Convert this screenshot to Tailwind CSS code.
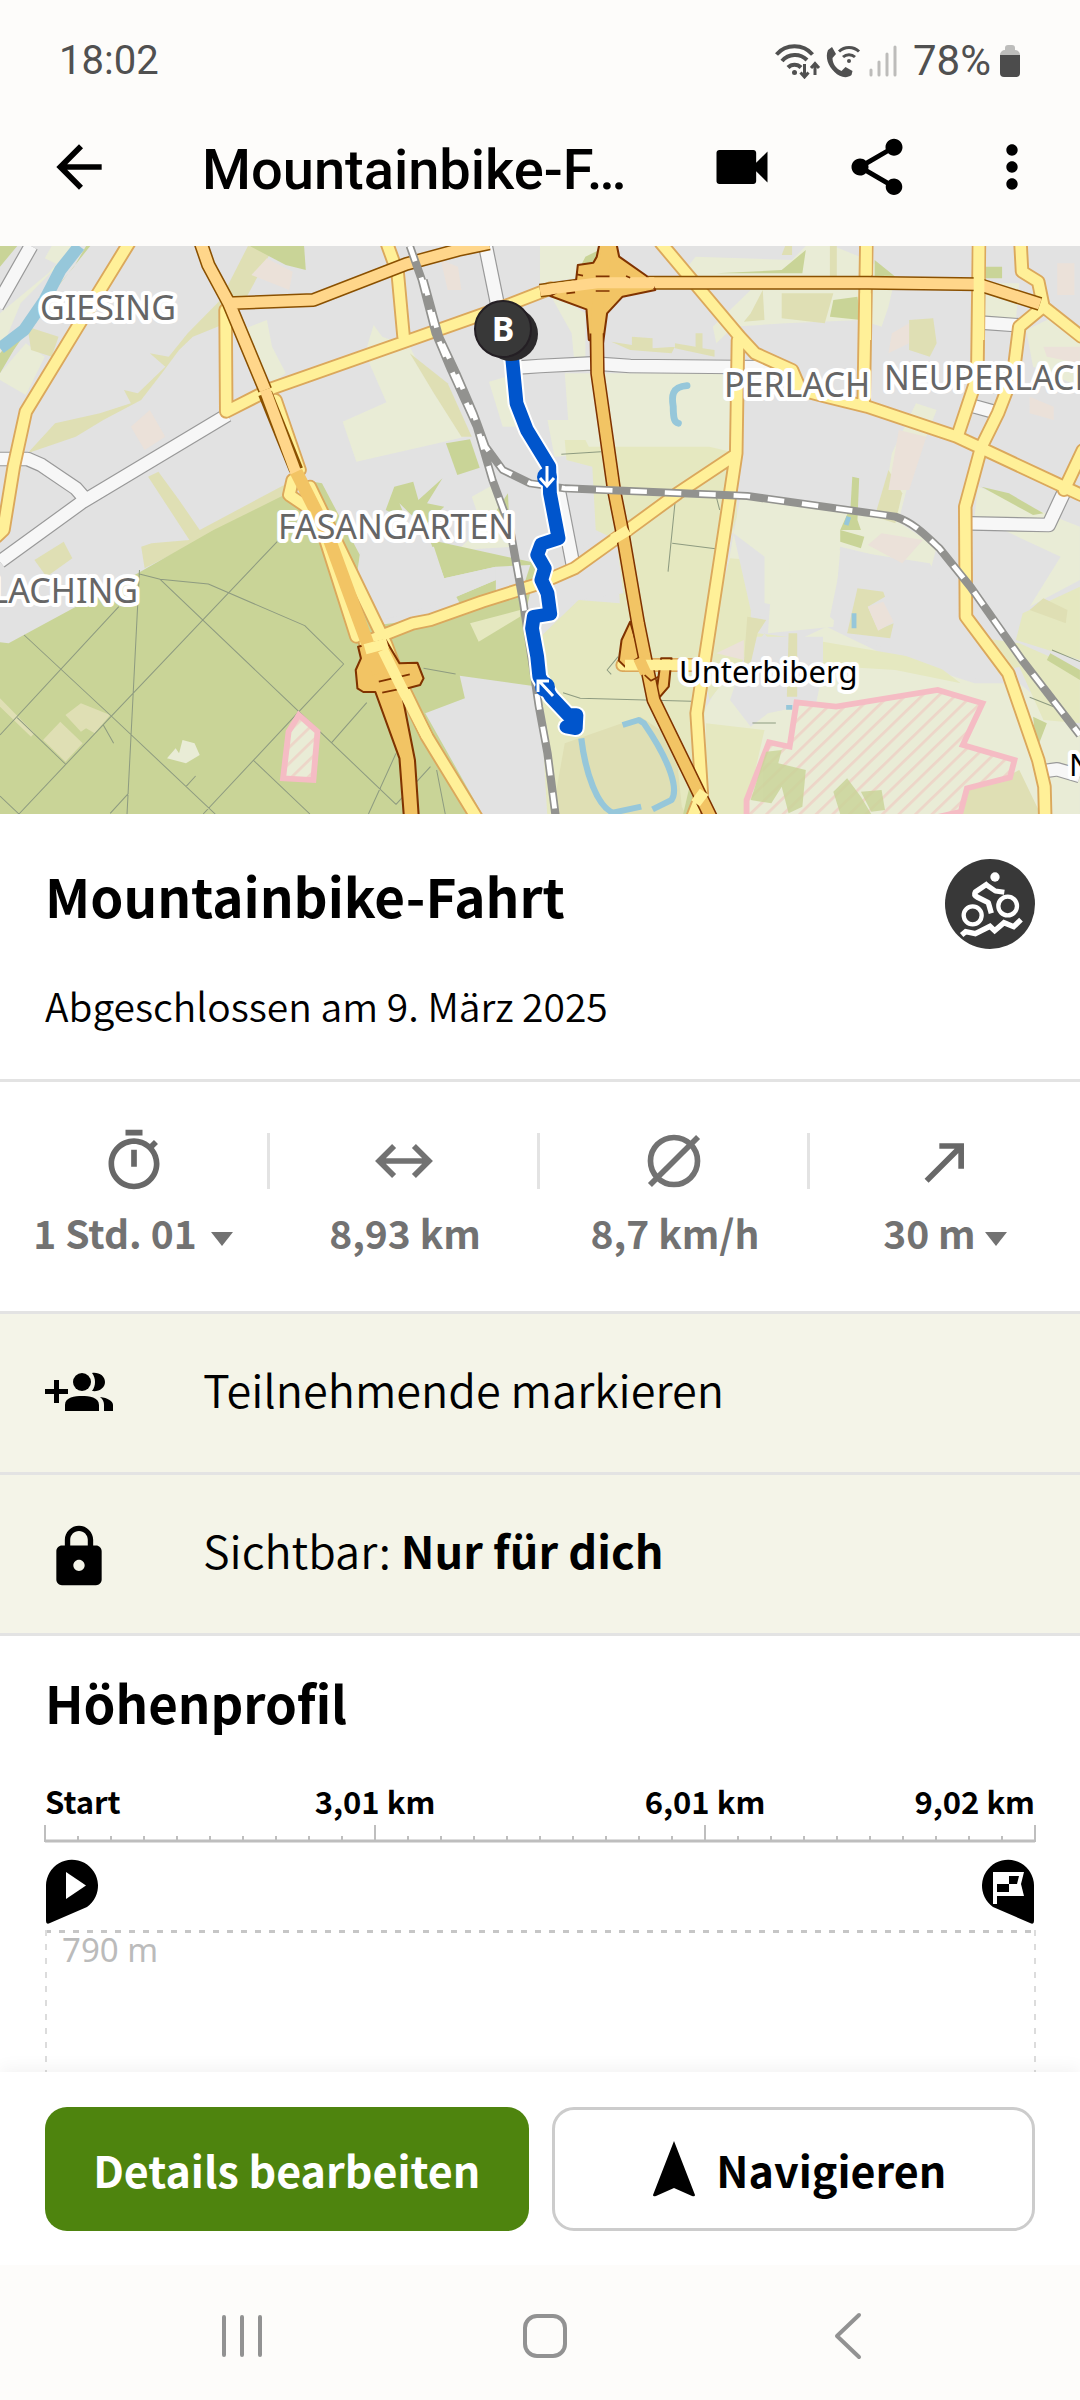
<!DOCTYPE html>
<html lang="de">

<head>
  <meta charset="UTF-8" />
  <meta name="viewport" content="width=device-width, initial-scale=1.0" />
  <title>Mountainbike-Fahrt</title>
  <script src="https://cdn.jsdelivr.net/npm/@tailwindcss/browser@4"></script>
</head>

<body class="flex flex-col min-h-screen bg-white text-black font-['Noto_Sans_CJK_SC','Noto_Sans',sans-serif]">

  <!-- Status bar -->
  <div class="flex items-center justify-between h-[88px] pt-[34px] px-[59px] bg-[#fdfcfa] text-[#505050] text-[40px] leading-[56px] font-[Roboto,sans-serif]">
    <span>18:02</span>
    <div class="flex items-center">
      <svg class="w-[46px] h-9" viewBox="0 0 46 36" fill="none" stroke="#505050" stroke-width="4">
        <path d="M1.500 11.500a24 24 0 0 1 36 0M7 18a17 17 0 0 1 25-1M13 24.500a9 9 0 0 1 13 0" />
        <circle cx="19.500" cy="29.500" r="2.500" fill="#505050" stroke="none" />
        <path d="M29.500 21v12M25.500 29.500l4 4.500 4-4.500M40 32V21M36 25l4-4.500 4 4.500" stroke-width="3" />
      </svg>
      <svg class="w-9 h-9 ml-1" viewBox="0 0 36 36">
        <path d="M3 7l4-3 4 7-3.500 4c0 6 4 11 9 13l4-4 7 4-1 4c-5 4-12 2-17-3C3 23 0 14 3 7z" fill="#505050" />
        <path d="M14 8.500a14.500 14.500 0 0 1 20 0M18 14a9 9 0 0 1 12 0" fill="none" stroke="#505050" stroke-width="3" />
        <circle cx="24" cy="18" r="2" fill="#505050" />
      </svg>
      <svg class="w-7 h-9 ml-2" viewBox="0 0 28 36" stroke="#bdbcba" stroke-width="3" stroke-linecap="round">
        <path d="M2 27v5M10 19v13M18 11v21M26 4v28" />
      </svg>
      <span class="ml-4 text-[42px]">78%</span>
      <svg class="w-[22px] h-9 ml-2" viewBox="0 0 22 36">
        <path d="M6 5a3 3 0 0 1 3-3h4a3 3 0 0 1 3 3v2a5 5 0 0 1 5 5H1a5 5 0 0 1 5-5z" fill="#bdbdbb" />
        <path d="M1 12h20v18a4 4 0 0 1-4 4H5a4 4 0 0 1-4-4z" fill="#4c4c4c" />
      </svg>
    </div>
  </div>

  <!-- App bar -->
  <header class="flex items-center h-[158px] pl-[45px] pr-px bg-[#fdfcfa]">
    <button aria-label="Zurück" class="shrink-0">
      <svg class="w-[68px] h-[68px]" viewBox="0 0 24 24"><path d="M20 11H7.830l5.590-5.590L12 4l-8 8 8 8 1.410-1.410L7.830 13H20v-2z" /></svg>
    </button>
    <h1 class="flex-1 min-w-0 truncate ml-[89px] pt-[6px] text-[56px] leading-[72px] font-medium font-[Roboto,sans-serif]">Mountainbike-F…</h1>
    <button aria-label="Video" class="shrink-0 flex justify-center w-[135px]">
      <svg class="w-[68px] h-[68px]" viewBox="0 0 24 24"><path d="M17 10.500V7c0-.55-.45-1-1-1H4c-.55 0-1 .45-1 1v10c0 .55.45 1 1 1h12c.55 0 1-.45 1-1v-3.500l4 4v-11l-4 4z" /></svg>
    </button>
    <button aria-label="Teilen" class="shrink-0 flex justify-center w-[135px]">
      <svg class="w-[68px] h-[68px]" viewBox="0 0 24 24"><path d="M18 16.080c-.76 0-1.440.3-1.960.77L8.910 12.700c.05-.23.09-.46.09-.7s-.04-.47-.09-.7l7.050-4.110c.54.5 1.250.81 2.040.81 1.660 0 3-1.340 3-3s-1.340-3-3-3-3 1.340-3 3c0 .24.04.47.09.7L8.040 9.810C7.500 9.310 6.790 9 6 9c-1.660 0-3 1.340-3 3s1.340 3 3 3c.79 0 1.500-.31 2.040-.81l7.120 4.160c-.05.21-.08.43-.08.65 0 1.610 1.310 2.920 2.920 2.920s2.920-1.310 2.920-2.920-1.310-2.920-2.920-2.920z" /></svg>
    </button>
    <button aria-label="Mehr" class="shrink-0 flex justify-center w-[135px]">
      <svg class="w-[68px] h-[68px]" viewBox="0 0 24 24"><path d="M12 8c1.100 0 2-.9 2-2s-.9-2-2-2-2 .9-2 2 .9 2 2 2zm0 2c-1.100 0-2 .9-2 2s.9 2 2 2 2-.9 2-2-.9-2-2-2zm0 6c-1.100 0-2 .9-2 2s.9 2 2 2 2-.9 2-2-.9-2-2-2z" /></svg>
    </button>
  </header>

  <main class="flex-1 flex flex-col">
    <!-- Map -->
    <svg class="block w-full h-auto" viewBox="0 0 1080 568" role="img" aria-label="Karte der Tour">
      <defs>
        <pattern id="hatch" width="34" height="34" patternUnits="userSpaceOnUse" patternTransform="rotate(45)">
          <rect width="34" height="34" fill="#e9ecd6" />
          <rect width="8" height="34" fill="#edd5c8" />
        </pattern>
      </defs>
      <rect width="1080" height="568" fill="#e2e2e2" />

      <g transform="scale(.34436 .33333) translate(0 -18)" stroke-linejoin="round">
        <!-- Parks, fields, woods -->
        <g fill="#e9ecd6">
          <path d="M0 220L140 100 210 18H150L130 55 170 75 60 190 0 340V420L75 465 130 350 75 310 0 400z" />
          <path d="M700 270L775 240 790 320 830 400 790 430 740 340z" />
          <path d="M1085 255L1110 290 1190 320 1260 460 1350 590 1290 605 1035 665 995 545 1122 487 1060 340z" />
          <path d="M1420 425L1470 410 1480 470 1520 560 1460 560z" />
          <path d="M1370 770L1440 730 1480 830 1500 920 1330 930 1400 860z" />
          <path d="M1568 18H1740L1700 110 1568 130z" />
          <path d="M1590 540L1650 540 1640 400H2130V880L1770 880 1760 640 1610 650z" />
          <path d="M1590 150L1700 220 1700 390H1670L1660 280z" />
          <path d="M2020 50L2300 60 2340 18H2420L2520 60 2600 110 2580 200 2560 260 2500 240 2280 250 2130 260 2080 310 2070 260 2180 150 1960 130z" />
          <path d="M2660 490L2720 510 2640 720 2610 840 2560 830 2590 640z" />
          <path d="M2860 130H2960L2950 240H2850z" />
          <path d="M2980 270L3060 230 3136 300V440L3000 380z" />
          <path d="M2840 740L3136 860V1020L2990 1100 3080 950 2830 830z" />
          <path d="M2150 770L2400 790 2600 840 2720 920 2700 1000 2560 950 2440 920 2400 1130 2180 1080 2110 1000z" />
          <path d="M2110 1300L2400 1160 2560 1240 2830 1330 2960 1330 3136 1480V1740H2040V1420z" />
          <path d="M2240 1040L2300 1060 2290 950 2440 930 2420 1160 2230 1180z" />
        </g>
        <g fill="#e5e8c0">
          <path d="M1640 600H1700L1710 620H2060L2140 640V830L2100 960 2030 1560 2060 1740H1590L1560 1200 1680 1080 1800 1090 1790 900 1730 870 1720 680 1645 660z" />
          <path d="M2120 955L2185 960 2180 1130 2200 1180 2360 1200 2700 1260 2790 1330 2600 1290 2280 1270 2220 1180 2160 1260 2120 1300 2060 1380 2040 1250z" />
          <path d="M2050 1450L2220 1470 2160 1740H2050z" />
          <path d="M2700 1170L2960 1210 3136 1290V1450L3030 1440 2960 1280 2900 1300 2830 1190z" />
          <path d="M2970 1120L3136 1040V1260L2950 1200z" />
        </g>
        <g fill="#dfdfb4">
          <path d="M720 18L790 30 680 240 560 290 520 330 470 400 410 480 300 540 220 590 80 640 160 550 290 520 380 490 360 450 400 460 480 380 435 340 490 350 545 280 640 180z" />
          <path d="M80 260L170 290 150 350 90 330z" />
          <path d="M430 710L460 695 520 780 580 870 825 735 830 770 580 900 420 985 410 920 440 910 550 900z" />
          <path d="M100 960L185 905 210 955 135 1010z" />
          <path d="M1190 340L1300 430 1370 590 1340 590 1260 460z" />
          <path d="M2180 220L2215 150 2220 240 2160 245zM2270 160H2420L2395 250 2270 235zM2640 240L2710 235 2720 310 2700 350 2640 330zM2410 18H2430V120H2410zM2280 18H2300V45H2270z" />
          <path d="M1775 305L1835 315V290L1895 295V325L1960 320 1950 340 1830 330zM1960 310L2020 320V280H2040V325L2075 330V350L1960 325z" />
          <path d="M2580 690L2620 760 2600 850 2540 830z" />
          <path d="M2990 1110L3030 1075 3100 1110 3095 1150z" />
          <path d="M1640 1510L1860 1430 1960 1500 1980 1700 2000 1740H1600z" />
          <path d="M2800 1650L2900 1620 2960 1590 3030 1740H2780z" />
        </g>
        <g fill="#c9d497">
          <path d="M0 1207L25 1210 400 1000 620 870 825 765 880 800 910 725 935 730 1045 945 1035 1010 1100 1155 1350 1120 1325 1070 1440 1020V980L1290 1015 1260 920 1195 930 1250 900 1560 970 1530 1100 1548 1338 1335 1307 1350 1375 1235 1420 1410 1740H0z" />
          <path d="M1295 610L1365 598 1393 683 1328 705z" />
          <path d="M725 18H883L888 90 830 75z" />
          <path d="M0 18H50L0 80zM215 80L250 18H262L160 150 40 330 0 400V340z" />
          <path d="M1145 740L1200 725 1215 780 1285 715 1240 790 1290 800 1230 860 1160 790 1180 840 1120 810z" />
          <path d="M1700 50L1740 30 1720 120 1680 90z" />
          <path d="M2080 100L2270 90 2340 30 2330 100zM2420 180L2490 170 2500 240 2410 230zM2540 60L2600 110H2540zM2860 80H2910V115H2860z" />
          <path d="M2850 740L2930 760 3030 820 3000 825z" />
          <path d="M2440 870L2510 890 2500 925 2440 905zM2475 710L2495 715 2490 840 2500 870H2440L2470 800z" />
          <path d="M3050 1240L3136 1290V1320L3040 1260zM3000 1430L3040 1450 3010 1530z" />
          <path d="M2000 1650L2030 1560 2020 1740H1980z" />
          <path d="M1430 830L1475 760 1480 870z" />
        </g>
        <g fill="#e2e2e2">
          <path d="M1060 900L1250 905 1290 1015 1440 980V1020L1325 1070 1200 1115 1110 1140 1040 1010 1045 945z" />
          <path d="M1440 980L1540 975 1520 1040 1440 1060z" />
          <path d="M1568 940L1790 900 1810 1060 1680 1080 1568 1130z" />
          <path d="M2130 880L2220 950 2220 1110 2200 1140 2180 1110z" />
          <path d="M2180 1190H2390V1290L2370 1390 2230 1420 2180 1460 2120 1380z" />
          <path d="M2410 1130L2450 930 2700 970 2790 1130 2900 1290 2820 1320 2480 1190z" />
        </g>
        <g fill="#ebe1d9">
          <path d="M730 105L775 55 850 95 840 150z" />
          <path d="M380 560L435 510 480 590 420 630z" />
          <path d="M1280 60L1330 80 1340 150 1300 150z" />
          <path d="M2590 280L2640 250V310L2580 340zM3070 70H3120V165H3070zM3030 320H3136V370L3040 350zM2990 470L3060 500 3060 540 2990 520z" />
          <path d="M2610 570L2690 590 2640 750 2580 750z" />
          <path d="M2520 915L2560 880 2680 900 2620 970z" />
          <path d="M2080 1240L2160 1200V1260z" />
        </g>
        <g fill="#dfdfb4">
          <path d="M0 1375L100 1480 90 1490 0 1400zM190 1425L235 1390 320 1425 275 1480 250 1465 235 1475zM125 1500L175 1445 240 1510 190 1565z" />
          <path d="M2170 1130L2225 1140 2200 1180 2180 1270H2160zM2290 1180H2315V1370H2285z" />
          <path d="M2490 1045L2565 1055 2570 1070 2520 1100 2550 1170 2595 1150 2585 1195 2460 1180z" />
        </g>
        <path d="M2520 1100L2565 1085 2595 1145 2550 1172z" fill="#ebe1d9" />
        <path d="M1365 1150L1510 1110 1510 1130 1390 1205z" fill="#e5e8c0" />
        <path d="M485 1555L510 1525 520 1540 530 1500 565 1510 580 1545 540 1570z" fill="#e9ecd6" />

        <!-- Water -->
        <g fill="none" stroke="#96c7da">
          <path d="M230 18L175 90 130 180 70 270 0 325" stroke-width="36" />
          <path d="M1995 437C1950 440 1950 470 1955 500 1955 540 1960 548 1970 550" stroke-width="20" stroke-linecap="round" />
          <path d="M1688 1495C1700 1600 1735 1700 1780 1718L1862 1700M1895 1708L1950 1680C1970 1650 1950 1570 1870 1450L1855 1440 1808 1455" stroke-width="18" />
          <path d="M2480 1120v45M2465 830l-8 25M2283 1402h18" stroke-width="14" />
        </g>

        <!-- Forest tracks -->
        <g fill="none" stroke="#8e9b80" stroke-width="3">
          <path d="M405 990L368 1740M405 1002L465 1018 605 1032 885 1157 998 1272 868 1415 590 1722M465 1018L868 1415 1150 1693 1250 1580M805 905L320 1432M70 1185L323 1428 625 1722M50 1433L190 1572M0 1668L55 1722 320 1432M345 1100L0 1485M735 1560L900 1722M1065 1388L963 1508M1150 1540L1070 1722M1230 1285L1323 1302M1268 1590L1293 1722M300 1455L330 1510M540 1640L568 1608M320 1720L373 1660" />
          <path d="M1630 643L1745 635M1960 790L1940 995M1952 910L2078 926M1635 1358L1685 1375 2008 1384M2080 770L2090 810M2185 1449H2253M2475 1600V1640M2990 1372L3060 1400M3055 1230L3136 1265M2335 1655L2300 1722M1795 1250L1763 1290 1775 1303" />
        </g>

        <!-- Restricted areas -->
        <g stroke="#f5bcc4" stroke-width="17" fill="url(#hatch)" stroke-linejoin="miter">
          <path d="M2313 1387L2428 1400 2723 1350 2853 1390 2796 1515 2946 1560 2933 1612 2808 1645 2790 1715 2600 1760H2168V1680L2233 1507 2293 1520z" />
          <path d="M868 1425L922 1475 910 1620 822 1615 838 1475z" />
        </g>
        <g fill="#c9d497" opacity=".8">
          <path d="M2225 1535L2270 1530 2260 1570 2340 1590 2330 1700 2290 1720 2270 1640 2240 1690 2180 1680z" />
          <path d="M2420 1655L2460 1615 2500 1670 2530 1722H2440zM2500 1655L2560 1650 2570 1710 2530 1715z" />
        </g>

        <!-- Minor roads -->
        <g id="white-roads" fill="none">
          <path d="M0 965L240 785 660 525M0 657L80 657 120 675 220 745 250 780M90 18L-10 200M1410 18L1445 195M1510 382L1568 378 1720 370 1830 378 2240 382M1620 740L1665 980M2850 248L2960 256M2815 495L2885 515M2820 850L3045 855 3095 745M3020 1595L3070 1588 3136 1608" />
        </g>

        <!-- Yellow roads -->
        <g id="yellow-roads" fill="none" stroke-linecap="round">
          <path d="M380 0L255 210 75 515 40 680 10 870 -10 890M655 210L657 515 790 445 1190 300 1450 205 1600 145M1120 0L1155 100 1172 290M850 720L840 765 890 800M800 480L870 690M930 850L1035 1190M900 740L970 890 1120 1210 1160 1320 1240 1490 1400 1760M1060 1207L1200 1150 1250 1140 1400 1085 1568 1030 1668 985 1803 885 1968 760 2135 645M1920 10L2148 290 2193 340 2300 390 2325 450 2400 470 2518 500 2778 590 3140 765M2143 300L2138 640 2103 880 2023 1420 2038 1660 2000 1760M2516 0L2508 490M2843 0L2838 410 2780 590M2963 0L2968 95 3015 125 3030 200 2960 260 2943 400 2898 520 2850 620 2803 800 2805 1130 2928 1300 3015 1560 3033 1640 3036 1760M3030 200L3140 290M3145 630L3090 750M1808 1275L2040 1275" />
        </g>

        <!-- Orange roads -->
        <g id="orange-roads" fill="none">
          <path d="M580 0L605 75 665 190 770 450M660 190L910 180 1180 72 1330 30 1420 10M1568 152L1740 128 1900 128 2520 128 2840 133 3020 192" />
        </g>
        <path d="M770 460L860 690" stroke="#8a5000" stroke-width="42" />
        <path d="M770 450L860 700" stroke="#ffd68a" stroke-width="32" />

        <!-- Motorways -->
        <g fill="#f2c464" stroke="#803300" stroke-width="6">
          <path d="M1743 0L1733 50 1723 68 1678 75 1673 120 1630 150 1598 168 1703 208 1710 300 1751 310 1763 220 1808 170 1903 150 1878 108 1798 50 1788 0z" />
          <path d="M1040 1220L1048 1255 1033 1290 1038 1345 1055 1356H1090L1160 1555 1175 1760H1218L1205 1560 1165 1350 1220 1335 1230 1315 1212 1268 1160 1270 1120 1200z" />
          <path d="M1830 1145L1805 1200 1797 1262 1815 1280 1860 1250zM1905 1365L1915 1290 1920 1255H1950L1942 1340 1900 1390z" />
        </g>
        <g fill="none">
          <path d="M1733 280L1735 400 1783 750 1808 880 1853 1150 1898 1380 2068 1740" stroke="#803300" stroke-width="42" />
          <path d="M1768 0L1745 120 1733 220 1735 400 1783 750 1808 880 1853 1150 1898 1380 2068 1740" stroke="#f2c464" stroke-width="33" />
          <path d="M860 695L950 880 1060 1190 1100 1300" stroke="#f2c464" stroke-width="38" />
          <path d="M1590 148L1740 128 1900 128" stroke="#ffd68a" stroke-width="33" />
          <path d="M1110 1358L1170 1345M1100 1325L1190 1303M1730 109h40M1730 153h40M1675 103l18 4M1645 160l25-3M1818 108l12 5" stroke="#803300" stroke-width="5" />
          <path d="M2516 18V105M2514 160V300M2843 18V300M1125 1210L1060 1228M1112 1230L1165 1340 1240 1490M1780 898L1825 870M2020 1690L2045 1655M1815 1275L2040 1275" stroke="#fff098" stroke-width="31" />
          <path d="M1855 1255L1875 1300" stroke="#f2c464" stroke-width="33" />
          <path d="M1872 1305L1890 1322 1912 1310" stroke="#803300" stroke-width="5" />
        </g>

        <!-- Railway -->
        <g id="rail" fill="none">
          <path d="M1190 18L1225 120 1265 280 1310 390 1385 560 1430 720 1480 860 1520 1090 1565 1400 1590 1540 1615 1740M1230 120L1275 290 1325 400 1375 520 1410 620 1460 690 1540 730 1640 745 2170 768 2600 830C2660 850 2700 900 2728 925L2818 1040 2968 1260 3136 1485" />
        </g>

        <!-- Recorded track -->
        <g id="track" fill="none" stroke-linecap="round">
          <path d="M1485 330L1500 490 1530 570 1595 680 1597 760 1622 895 1572 912 1560 945 1582 985 1572 1020 1590 1060 1598 1122 1550 1130 1545 1165 1560 1250 1566 1310 1600 1370 1650 1425 1674 1425 1672 1465 1645 1460" />
        </g>
      </g>

      <!-- Direction arrows on the track -->
      <g fill="none" stroke="#fff" stroke-width="3">
        <circle cx="547" cy="231" r="10" fill="#0055cc" stroke="none" />
        <path d="M547 220v18M540 232l7 8 7-8" />
        <circle cx="545" cy="441" r="10" fill="#0055cc" stroke="none" />
        <path d="M553 450l-13-14M538 446v-11h11" />
      </g>

      <!-- Place names -->
      <g class="font-['Noto_Sans',sans-serif] text-[34px]" fill="#666" stroke="#fff" stroke-width="8" stroke-linejoin="round" paint-order="stroke">
        <text x="40" y="74">GIESING</text>
        <text x="278" y="293">FASANGARTEN</text>
        <text x="138" y="357" text-anchor="end">HARLACHING</text>
        <text x="724" y="151">PERLACH</text>
        <text x="884" y="144">NEUPERLACH</text>
        <g fill="#000" class="text-[31px]">
          <text x="679" y="437">Unterbiberg</text>
          <text x="1069" y="530">Neubiberg</text>
        </g>
      </g>

      <!-- Start and end pins -->
      <circle cx="511" cy="88" r="27" fill="#2c2a2c" />
      <circle cx="503" cy="83" r="28" fill="#383838" stroke="#241f24" stroke-width="2" />
      <text x="503" y="95" text-anchor="middle" fill="#fff" class="font-['Noto_Sans',sans-serif] text-[34px] font-bold">B</text>
    </svg>

    <!-- Title -->
    <section class="flex justify-between px-[45px] pt-[45px] pb-11">
      <div>
        <h2 class="text-[53px] leading-[72px] font-bold">Mountainbike-Fahrt</h2>
        <p class="mt-11 text-[39px] leading-[60px] font-[350]">Abgeschlossen am 9. März 2025</p>
      </div>
      <svg class="w-[90px] h-[90px]" viewBox="30 30 270 270" role="img" aria-label="Mountainbike">
        <circle cx="165" cy="165" r="135" fill="#383838" />
        <circle cx="180" cy="84" r="14" fill="#fff" />
        <g fill="none" stroke="#fff">
          <circle cx="113" cy="199" r="27" stroke-width="13" />
          <circle cx="218" cy="171" r="28" stroke-width="13" />
          <path d="M159 103L121 129Q116 138 126 144L160 161 169 193" stroke-width="16" stroke-linejoin="round" />
          <path d="M152 106L181 126 208 130" stroke-width="15" stroke-linejoin="round" />
          <path d="M80 258L92 248 121 254 165 232 179 245 207 221 236 233 258 212" stroke-width="16" />
        </g>
      </svg>
    </section>

    <!-- Stats -->
    <section class="grid grid-cols-4 border-y-3 border-[#e3e3e3] pt-[51px] pb-[51px] text-[#727272] text-[39px] font-bold">
      <div class="text-center">
        <div class="flex items-center justify-center h-14 border-r-3 border-[#e3e3e3]">
          <svg class="shrink-0 w-[68px] h-[68px]" viewBox="0 0 24 24" fill="#686868"><path d="M15 1H9v2h6V1zm-4 13h2V8h-2v6zm8.030-6.610l1.420-1.420c-.43-.51-.9-.99-1.410-1.410l-1.420 1.420C16.070 4.740 14.120 4 12 4c-4.970 0-9 4.030-9 9s4.020 9 9 9 9-4.030 9-9c0-2.120-.74-4.070-1.970-5.610zM12 20c-3.870 0-7-3.130-7-7s3.130-7 7-7 7 3.130 7 7-3.130 7-7 7z" /></svg>
        </div>
        <button class="flex items-center justify-center w-full mt-[15px] pr-1 leading-[56px]">1 Std. 01
          <svg class="w-[22px] h-[14px] ml-[14px] mt-[14px]" viewBox="0 0 22 14" fill="#727272"><path d="M0 0h22L11 14z" /></svg>
        </button>
      </div>
      <div class="text-center">
        <div class="flex items-center justify-center h-14 border-r-3 border-[#e3e3e3]">
          <svg class="shrink-0 w-[68px] h-[68px]" viewBox="0 0 24 24" fill="none" stroke="#727272" stroke-width="2"><path d="M3 12h18M8.500 6.700L3.200 12l5.300 5.300M15.500 6.700l5.300 5.300-5.300 5.300" /></svg>
        </div>
        <p class="mt-[15px] leading-[56px]">8,93 km</p>
      </div>
      <div class="text-center">
        <div class="flex items-center justify-center h-14 border-r-3 border-[#e3e3e3]">
          <svg class="shrink-0 w-[68px] h-[68px]" viewBox="0 0 24 24" fill="none" stroke="#727272" stroke-width="2"><circle cx="12" cy="12" r="8.300" /><path d="M3.500 20.500l17-17" /></svg>
        </div>
        <p class="mt-[15px] leading-[56px]">8,7 km/h</p>
      </div>
      <div class="text-center">
        <div class="flex items-center justify-center h-14">
          <svg class="shrink-0 w-[68px] h-[68px]" viewBox="0 0 24 24" fill="none" stroke="#686868" stroke-width="2"><path d="M5.500 19L17.700 6.800M10 6.700h7.700v8" /></svg>
        </div>
        <button class="flex items-center justify-center w-full mt-[15px] leading-[56px]">30 m
          <svg class="w-[22px] h-[14px] ml-[9px] mt-[14px]" viewBox="0 0 22 14" fill="#727272"><path d="M0 0h22L11 14z" /></svg>
        </button>
      </div>
    </section>

    <!-- Participants and visibility -->
    <button class="flex items-center w-full h-[161px] px-[45px] border-b-3 border-[#e3e3e3] bg-[#f4f4e8] text-left">
      <svg class="shrink-0 w-[68px] h-[68px]" viewBox="0 -3 68 68">
        <path d="M0 27h9v-9h5v9h9v5h-9v9H9v-9H0z" />
        <circle cx="37" cy="20" r="9" />
        <path d="M20 49v-6c0-8 10-9 17-9s17 1 17 9v6zM47 11c7-1 13 3 13 9s-6 10-13 9c4-5 4-13 0-18zM55 35c8 1 13 4 13 8v6h-9v-6c0-3-1-6-4-8z" />
      </svg>
      <span class="ml-[90px] pb-2 text-[45px] leading-[60px] font-[350]">Teilnehmende markieren</span>
    </button>
    <button class="flex items-center w-full h-[161px] px-[45px] border-b-3 border-[#e3e3e3] bg-[#f4f4e8] text-left">
      <svg class="shrink-0 w-[68px] h-[68px]" viewBox="0 -1 24 24"><path d="M18 8h-1V6c0-2.760-2.240-5-5-5S7 3.240 7 6v2H6c-1.100 0-2 .9-2 2v10c0 1.100.9 2 2 2h12c1.100 0 2-.9 2-2V10c0-1.100-.9-2-2-2zm-6 9c-1.100 0-2-.9-2-2s.9-2 2-2 2 .9 2 2-.9 2-2 2zm3.100-9H8.900V6c0-1.710 1.390-3.100 3.100-3.100 1.710 0 3.100 1.390 3.100 3.100v2z" /></svg>
      <span class="ml-[90px] pb-2 text-[45px] leading-[60px] font-[350]">Sichtbar: <b class="font-bold">Nur für dich</b></span>
    </button>

    <!-- Elevation profile -->
    <section class="flex-1 flex flex-col px-[45px] pt-[30px]">
      <h2 class="text-[51px] leading-[72px] font-bold">Höhenprofil</h2>
      <div class="grid grid-cols-6 mt-[41px] text-[31px] leading-[44px] font-bold">
        <span>Start</span>
        <span class="col-span-2 text-center">3,01 km</span>
        <span class="col-span-2 text-center">6,01 km</span>
        <span class="text-right">9,02 km</span>
      </div>
      <svg id="axis" class="w-full h-[18px] mt-0.5 overflow-visible" stroke="#bebebe" stroke-width="2">
        <line x1="0" y1="16" x2="100%" y2="16" stroke-width="3" />
      </svg>
      <div class="flex justify-between mt-[15px]">
        <svg class="w-[54px] h-[66px]" viewBox="0 0 54 66">
          <path d="M1 27a26 26 0 1 1 41 22L5 65q-4 2-4-2z" />
          <path d="M21 14v27l20-13.500z" fill="#fff" />
        </svg>
        <svg class="w-[54px] h-[66px]" viewBox="0 0 54 66">
          <path d="M53 27a26 26 0 1 0-41 22l37 16q4 2 4-2z" />
          <path d="M12 14h31l-3 12 3 12H16v8h-4z" fill="#fff" />
          <path d="M16 26h12v8H16zM28 18h10l-2 8h-8z" />
        </svg>
      </div>
      <div class="relative flex-1 mt-[6px] min-h-[120px]">
        <svg class="absolute inset-0 w-full h-full overflow-visible">
          <line x1="0" y1="1.500" x2="100%" y2="1.500" stroke="#c6c6c6" stroke-width="3" stroke-dasharray="6 8" />
          <line x1="1" y1="0" x2="1" y2="100%" stroke="#dcdcdc" stroke-width="2" stroke-dasharray="6 8" />
          <line x1="100%" y1="0" x2="100%" y2="100%" stroke="#dcdcdc" stroke-width="2" stroke-dasharray="6 8" />
        </svg>
        <p class="pl-[17px] text-[33px] leading-10 text-[#bbb] font-['Noto_Sans',sans-serif]">790 m</p>
      </div>
    </section>
  </main>

  <!-- Actions -->
  <div class="relative grid grid-cols-2 gap-[23px] px-[45px] pt-[35px] pb-[34px] bg-white shadow-[0_-4px_16px_rgba(0,0,0,0.05)] text-[43px] font-bold">
    <button class="h-[124px] rounded-[22px] bg-[#4e840e] text-white">Details bearbeiten</button>
    <button class="flex items-center justify-center h-[124px] pl-3 rounded-[22px] border-3 border-[#ccc]">
      <svg class="w-11 h-[56px] mr-5" viewBox="0 0 44 56"><path d="M22 0l21 54q0 2-3 1L22 47 4 55q-3 1-3-1z" /></svg>
      Navigieren
    </button>
  </div>

  <!-- System navigation -->
  <nav class="relative grid grid-cols-3 items-center justify-items-center h-[135px] pl-[91px] pr-[81px] pt-[6px] bg-[#fdfcfa]">
    <button aria-label="Letzte Apps">
      <svg class="w-12 h-12" viewBox="0 0 48 48" stroke="#929292" stroke-width="4" stroke-linecap="round"><path d="M6 5v38M24 5v38M42 5v38" /></svg>
    </button>
    <button aria-label="Startbildschirm">
      <svg class="w-12 h-12" viewBox="0 0 48 48" fill="none" stroke="#929292" stroke-width="4"><rect x="4" y="4" width="40" height="40" rx="12" /></svg>
    </button>
    <button aria-label="Zurück">
      <svg class="w-12 h-12" viewBox="0 0 48 48" fill="none" stroke="#929292" stroke-width="4" stroke-linecap="round" stroke-linejoin="round"><path d="M35 3L13 24l22 21" /></svg>
    </button>
  </nav>

  <script>
    const SVG_NS = 'http://www.w3.org/2000/svg';

    // Axis ticks, every tenth one is long
    const axis = document.querySelector('#axis');
    for (let i = 0; i <= 30; i++) {
      const tick = document.createElementNS(SVG_NS, 'line');
      const x = `${(i / 30) * 100}%`;
      tick.setAttribute('x1', x);
      tick.setAttribute('x2', x);
      tick.setAttribute('y1', i % 10 === 0 ? 0 : 11);
      tick.setAttribute('y2', 17);
      axis.appendChild(tick);
    }

    // Draw each line group twice: casing below, fill on top
    function addCasing(id, casing, casingWidth, fill, fillWidth, dash) {
      const group = document.querySelector(id);
      const top = group.querySelector('path');
      const bottom = top.cloneNode();
      group.insertBefore(bottom, top);
      bottom.setAttribute('stroke', casing);
      bottom.setAttribute('stroke-width', casingWidth);
      top.setAttribute('stroke', fill);
      top.setAttribute('stroke-width', fillWidth);
      if (dash) top.setAttribute('stroke-dasharray', dash);
    }

    addCasing('#white-roads', '#999', 44, '#f7f7f7', 37);
    addCasing('#rail', '#92928f', 24, '#fff', 14, '48 52');
    addCasing('#yellow-roads', '#dba85c', 42, '#fff098', 31);
    addCasing('#orange-roads', '#8a5000', 42, '#ffd68a', 33);
    addCasing('#track', '#fff', 52, '#0055cc', 40);
  </script>
</body>

</html>
